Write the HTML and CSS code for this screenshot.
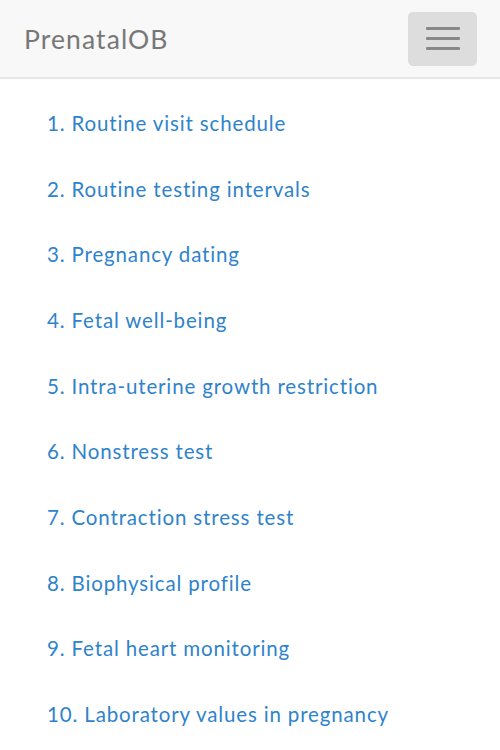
FILE: index.html
```html
<!DOCTYPE html>
<html>
<head>
<meta charset="utf-8">
<link rel="stylesheet" href="styles.css">
</head>
<body>
<nav class="navbar">
  <span class="brand">PrenatalOB</span>
  <button class="toggle" aria-label="menu">
    <span class="bar"></span><span class="bar"></span><span class="bar"></span>
  </button>
</nav>
<ul class="menu">
  <li><a href="#">1. Routine visit schedule</a></li>
  <li><a href="#">2. Routine testing intervals</a></li>
  <li><a href="#">3. Pregnancy dating</a></li>
  <li><a href="#">4. Fetal well-being</a></li>
  <li><a href="#">5. Intra-uterine growth restriction</a></li>
  <li><a href="#">6. Nonstress test</a></li>
  <li><a href="#">7. Contraction stress test</a></li>
  <li><a href="#">8. Biophysical profile</a></li>
  <li><a href="#">9. Fetal heart monitoring</a></li>
  <li><a href="#">10. Laboratory values in pregnancy</a></li>
</ul>
</body>
</html>
```
FILE: styles.css
```css
html, body {
  margin: 0;
  padding: 0;
  background: #ffffff;
  font-family: Lato, "Open Sans", sans-serif;
  font-variant-ligatures: none;
}
.navbar {
  height: 77px;
  background: #f8f8f8;
  border-bottom: 2px solid #e7e7e7;
  display: flex;
  align-items: center;
  justify-content: space-between;
  padding: 0 23px 0 24px;
  box-sizing: content-box;
}
.brand {
  font-size: 26.5px;
  color: #777777;
  letter-spacing: 1.1px;
}
.toggle {
  width: 69px;
  height: 54px;
  background: #dddddd;
  border: none;
  border-radius: 5px;
  display: flex;
  flex-direction: column;
  align-items: center;
  justify-content: center;
  gap: 7px;
  padding: 0;
}
.bar {
  display: block;
  width: 34px;
  height: 3px;
  background: #888888;
  border-radius: 1px;
}
.menu {
  list-style: none;
  margin: 0;
  padding: 11px 0 0 47px;
}
.menu li {
  height: 65.7px;
  display: flex;
  align-items: center;
}
.menu a {
  font-size: 20.5px;
  color: #2f83cb;
  text-decoration: none;
  letter-spacing: 0.85px;
}
```
